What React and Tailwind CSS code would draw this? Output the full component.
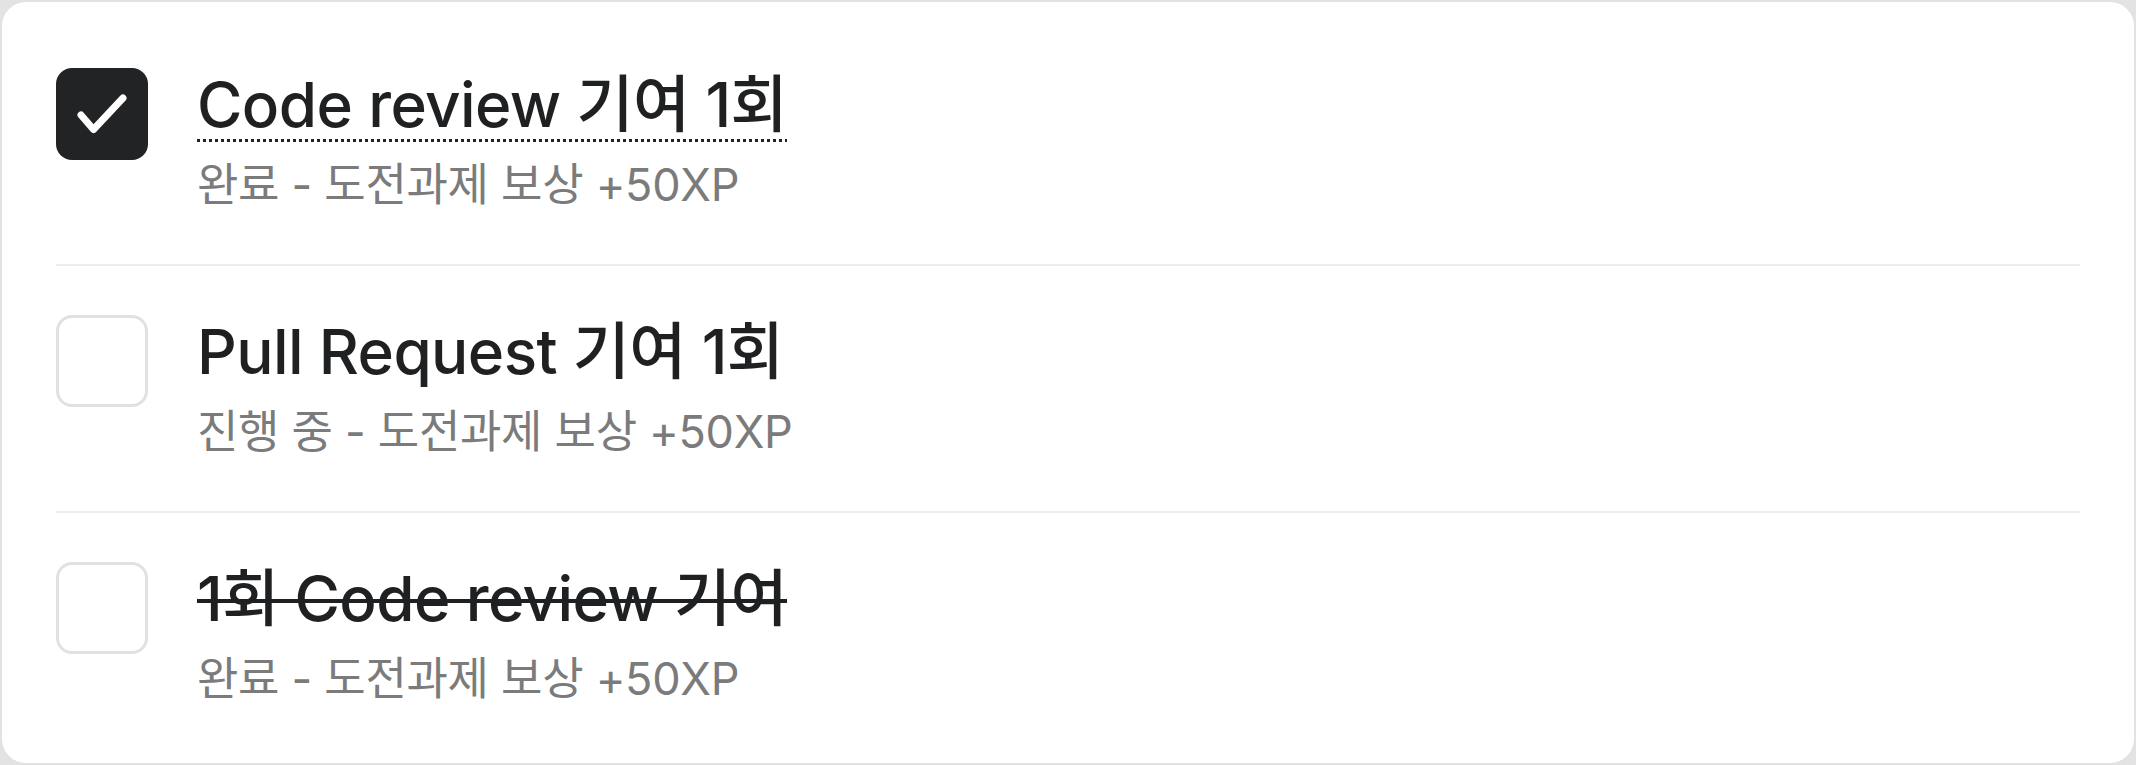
const tasks = [
    { title: "Code review 기여 1회", status: "완료", checked: true, style: "dotted" },
    { title: "Pull Request 기여 1회", status: "진행 중", checked: false, style: "plain" },
    { title: "1회 Code review 기여", status: "완료", checked: false, style: "strike" },
];

const font = { fontFamily: "Inter, 'Noto Sans CJK KR', sans-serif" };

const CheckBox = ({ checked }) =>
    checked ? (
        <div className="mt-[5px] flex h-[92px] w-[92px] shrink-0 items-center justify-center rounded-[16px] bg-[#212325]">
            <svg width="92" height="92" viewBox="0 0 92 92" fill="none">
                <path d="M25 47 L37.5 61.5 L67 30" stroke="#ffffff" strokeWidth="7" strokeLinecap="round" strokeLinejoin="round" />
            </svg>
        </div>
    ) : (
        <div className="mt-[5px] h-[92px] w-[92px] shrink-0 rounded-[16px] border-[3px] border-[#e1e1e1] bg-white" />
    );

const TaskRow = ({ task, last }) => {
    const titleClass =
        task.style === "dotted"
            ? "underline decoration-dotted decoration-[3px] underline-offset-[12px] decoration-[#222]"
            : task.style === "strike"
            ? "line-through decoration-[4px]"
            : "";

    return (
        <div className={`flex h-[247px] items-start gap-[49px] pt-[44px] ${last ? "" : "border-b-2 border-[#ececec]"}`}>
            <CheckBox checked={task.checked} />
            <div className="flex flex-col">
                <span className={`text-[62px] font-medium leading-[84px] tracking-[-0.6px] text-[#1e2022] ${titleClass}`}>{task.title}</span>
                <span className="mt-[8px] text-[45px] leading-[60px] tracking-[-0.3px] text-[#7b7b7b]">
                    {task.status} - 도전과제 보상 +50XP
                </span>
            </div>
        </div>
    );
};

export default function App() {
    return (
        <div className="h-[765px] w-[2136px] bg-[#e3e3e3]" style={font}>
            <div className="h-full rounded-[26px] border-2 border-[#e2e2e2] bg-white px-[54px] pt-[17px]">
                {tasks.map((task, i) => (
                    <TaskRow key={i} task={task} last={i === tasks.length - 1} />
                ))}
            </div>
        </div>
    );
}
